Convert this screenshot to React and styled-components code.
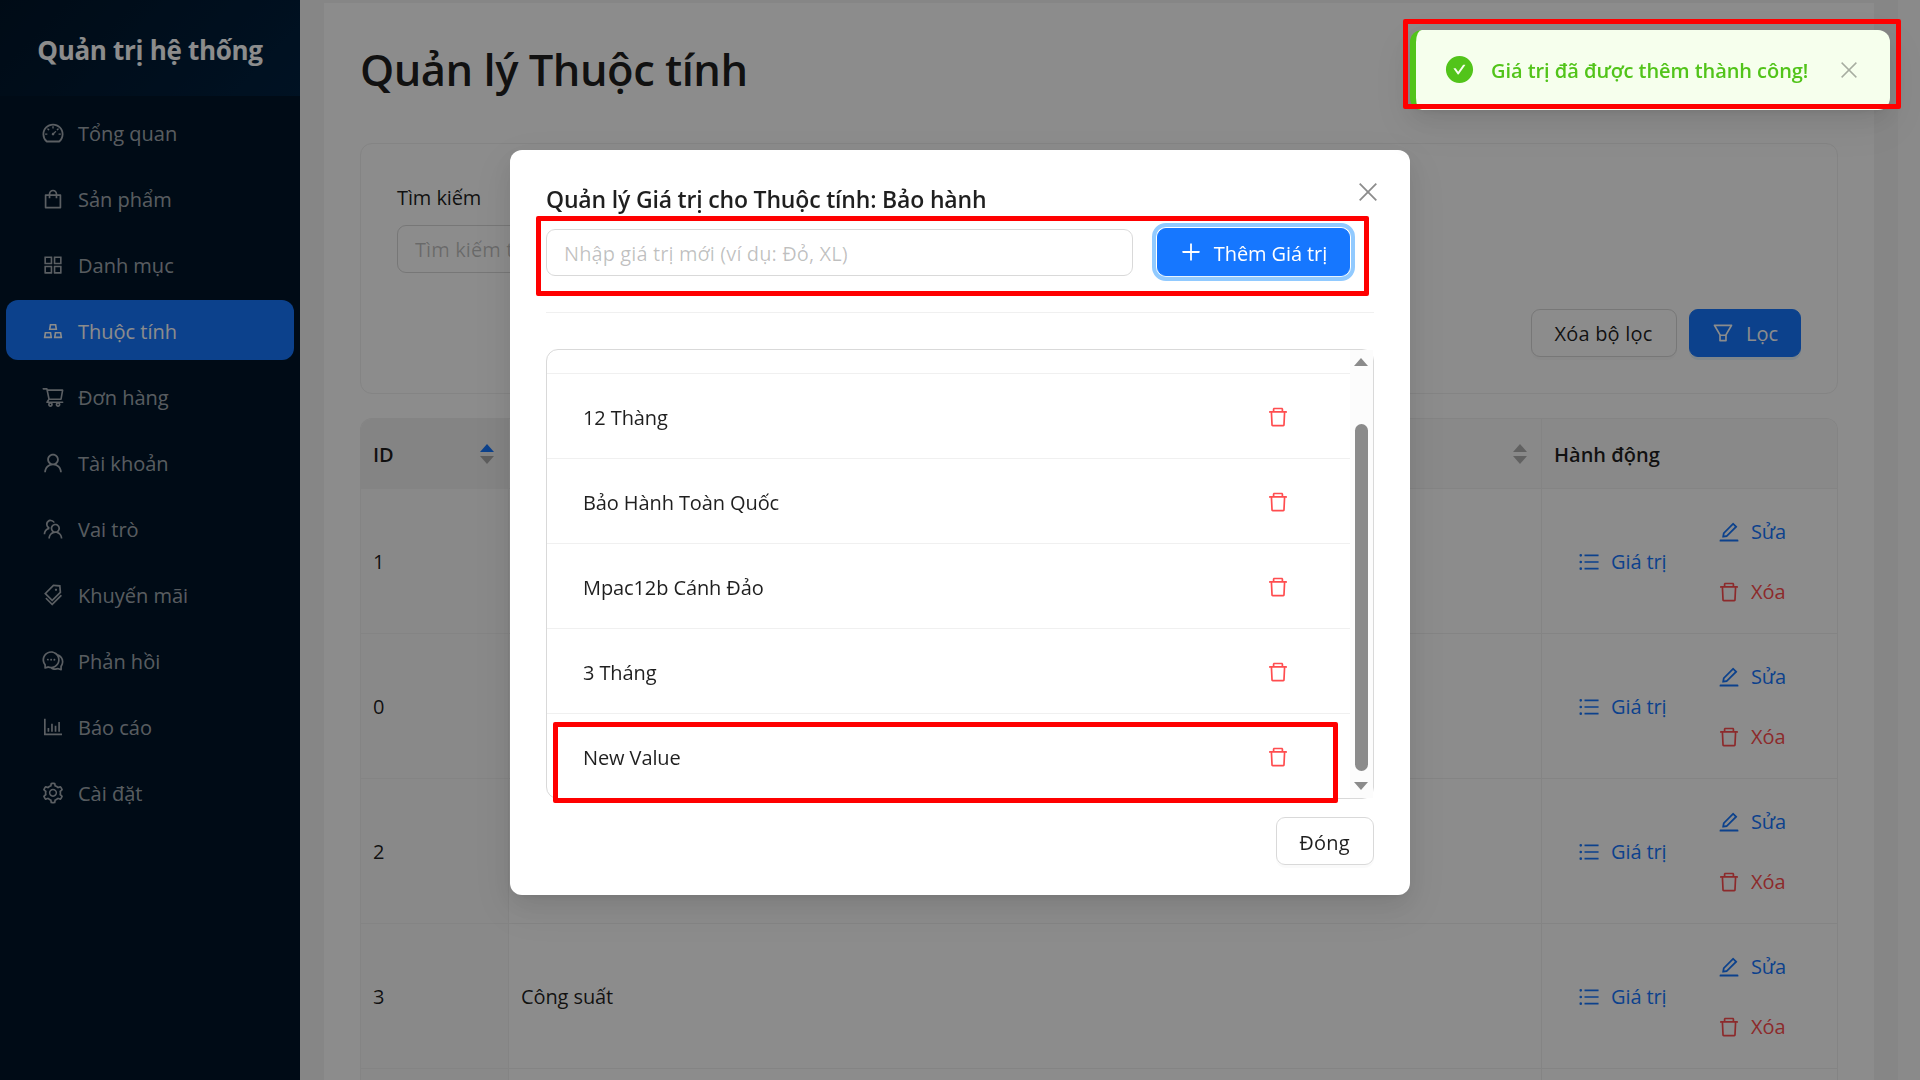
import React from "react";
import styled, { createGlobalStyle, css } from "styled-components";
import {
  AiOutlineDashboard,
  AiOutlineShopping,
  AiOutlineAppstore,
  AiOutlineGold,
  AiOutlineShoppingCart,
  AiOutlineUser,
  AiOutlineTeam,
  AiOutlineTags,
  AiOutlineComment,
  AiOutlineBarChart,
  AiOutlineSetting,
  AiOutlineFilter,
  AiOutlineUnorderedList,
  AiOutlineEdit,
  AiOutlineDelete,
  AiOutlinePlus,
  AiFillCheckCircle,
} from "react-icons/ai";

const GlobalStyle = createGlobalStyle`
  *, *::before, *::after { box-sizing: border-box; }
  body {
    margin: 0;
    overflow: hidden;
    background: #f5f5f5;
    color: rgba(0, 0, 0, 0.88);
    font-family: "Open Sans", "Noto Sans", sans-serif;
    font-size: 20px;
    line-height: 32px;
    letter-spacing: -0.1px;
  }
  svg { display: block; flex: none; }
`;

const Page = styled.div`
  display: flex;
  width: 1920px;
  height: 1080px;
  overflow: hidden;
`;

/* ---------- sidebar ---------- */
const Sidebar = styled.aside`
  flex: none;
  width: 300px;
  background: #001529;
`;
const Brand = styled.div`
  height: 96px;
  display: flex;
  align-items: center;
  justify-content: center;
  padding-top: 3px;
  background: linear-gradient(135deg, #001529 0%, #002140 100%);
  color: #fff;
  font-size: 26px;
  font-weight: 700;
  letter-spacing: -0.3px;
  white-space: nowrap;
`;
const Menu = styled.nav`
  display: flex;
  flex-direction: column;
  gap: 6px;
  padding: 6px;
`;
const MenuItem = styled.a`
  display: flex;
  align-items: center;
  gap: 13.5px;
  height: 60px;
  padding-left: 34.5px;
  border-radius: 12px;
  color: ${(p) => (p.$active ? "#fff" : "rgba(255, 255, 255, 0.65)")};
  background: ${(p) => (p.$active ? "#1677ff" : "transparent")};
  letter-spacing: 0;
  svg { width: 24px; height: 24px; margin-top: 1px; }
`;
const MenuLabel = styled.span`
  padding-top: 4px;
`;

/* ---------- content ---------- */
const Content = styled.main`
  flex: 1;
  padding: 3px 24px 0;
`;
const Panel = styled.section`
  height: 1077px;
  padding: 34px 36px 0;
  background: #fff;
`;
const PageScroll = styled.div`
  flex: none;
  width: 22px;
  background: #fcfcfc;
`;
const PageTitle = styled.h1`
  margin: 0 0 40px;
  font-size: 43.5px;
  font-weight: 600;
  line-height: 66px;
  letter-spacing: -0.5px;
`;
const FilterCard = styled.div`
  display: flex;
  flex-direction: column;
  align-items: flex-start;
  height: 251px;
  padding: 36px;
  border: 1px solid #f0f0f0;
  border-radius: 12px;
`;
const FieldLabel = styled.label`
  height: 45px;
  padding-top: 2px;
`;
const Input = styled.div`
  display: flex;
  align-items: center;
  width: ${(p) => p.$width}px;
  height: ${(p) => p.$height}px;
  padding: ${(p) => (p.$height > 47 ? 2 : 3)}px 17px 0;
  border: 1px solid #d9d9d9;
  border-radius: 9px;
  background: #fff;
  color: rgba(0, 0, 0, 0.25);
  letter-spacing: 0.1px;
  white-space: nowrap;
`;
const FilterActions = styled.div`
  display: flex;
  gap: 12px;
  align-self: flex-end;
  margin-top: 36px;
`;
const Button = styled.button`
  display: flex;
  align-items: center;
  justify-content: center;
  gap: 11px;
  width: ${(p) => p.$width}px;
  height: 48px;
  padding: 0 1px 0 0;
  border: 1px solid #d9d9d9;
  border-radius: 9px;
  background: #fff;
  box-shadow: 0 3px 0 rgba(0, 0, 0, 0.02);
  color: rgba(0, 0, 0, 0.88);
  font: inherit;
  letter-spacing: 0.2px;
  white-space: nowrap;
  svg { width: 24px; height: 24px; }
  span { padding-top: ${(p) => (p.$low ? 3 : 2)}px; }
  ${(p) =>
    p.$primary &&
    css`
      border-color: #1677ff;
      background: #1677ff;
      color: #fff;
      letter-spacing: -0.1px;
      box-shadow: 0 3px 0 rgba(5, 145, 255, 0.1);
    `}
  ${(p) =>
    p.$focused &&
    css`
      outline: 4.5px solid #91caff;
      outline-offset: 1px;
    `}
`;

/* ---------- table ---------- */
const Table = styled.div`
  margin-top: 24px;
  border: 1px solid #f0f0f0;
  border-bottom: 0;
  border-radius: 12px 12px 0 0;
  overflow: hidden;
`;
const Row = styled.div`
  display: grid;
  grid-template-columns: 148px 1033px 1fr;
  height: ${(p) => (p.$head ? 70 : 145)}px;
  font-weight: ${(p) => (p.$head ? 600 : 400)};
  letter-spacing: ${(p) => (p.$head ? 0 : -0.1)}px;
  background: ${(p) => (p.$head ? "#fafafa" : "#fff")};
`;
const Cell = styled.div`
  display: flex;
  align-items: center;
  justify-content: space-between;
  padding: 2px 14px 0 12px;
  border-right: ${(p) => (p.$last ? 0 : 1)}px solid #f0f0f0;
  border-bottom: 1px solid #f0f0f0;
  background: ${(p) => p.$bg || "transparent"};
`;
const Sorter = styled.span`
  display: flex;
  flex-direction: column;
  gap: 4px;
  padding-bottom: 2px;
`;
const Caret = styled.i`
  width: 0;
  height: 0;
  border: 7px solid transparent;
  ${(p) =>
    p.$up
      ? css`border-top: 0; border-bottom: 8px solid ${p.$on ? "#1677ff" : "rgba(0,0,0,0.29)"};`
      : css`border-bottom: 0; border-top: 8px solid rgba(0, 0, 0, 0.29);`}
`;
const ActionCell = styled(Cell)`
  justify-content: flex-start;
  padding: 0 0 0 13px;
`;
const ActionStack = styled.div`
  display: flex;
  flex-direction: column;
  gap: 12px;
`;
const LinkButton = styled.a`
  display: flex;
  align-items: center;
  gap: 10.5px;
  width: ${(p) => p.$width || 110}px;
  height: 48px;
  padding-left: 21.5px;
  color: ${(p) => (p.$danger ? "#ff4d4f" : "#1677ff")};
  white-space: nowrap;
  svg { width: 24px; height: 24px; margin-top: 1px; }
  span { padding-top: 2px; }
`;

/* ---------- modal ---------- */
const Mask = styled.div`
  position: fixed;
  inset: 0;
  display: flex;
  justify-content: center;
  align-items: flex-start;
  padding-top: 150px;
  background: rgba(0, 0, 0, 0.45);
`;
const Dialog = styled.div`
  width: 900px;
  height: 745px;
  padding: 30px 36px;
  border-radius: 12px;
  background: #fff;
  box-shadow: 0 9px 24px rgba(0, 0, 0, 0.08), 0 5px 9px -6px rgba(0, 0, 0, 0.12),
    0 14px 42px 12px rgba(0, 0, 0, 0.05);
`;
const DialogHead = styled.div`
  display: flex;
  justify-content: space-between;
  height: 48px;
  font-size: 23px;
  font-weight: 600;
  line-height: 38px;
  letter-spacing: -0.18px;
  svg {
    margin: 3px -3px 0 0;
    color: rgba(0, 0, 0, 0.45);
  }
`;
const AddRow = styled.div`
  display: flex;
  align-items: center;
  gap: 24px;
`;
const Divider = styled.hr`
  height: 1px;
  margin: 36px 0;
  border: 0;
  background: #f0f0f0;
`;
const ListBox = styled.div`
  display: flex;
  height: 450px;
  border: 1px solid #d9d9d9;
  border-radius: 12px;
`;
const ListItems = styled.div`
  flex: 1;
`;
const ListItem = styled.div`
  display: flex;
  align-items: center;
  justify-content: space-between;
  height: 85px;
  padding: ${(p) => (p.$last ? 2 : 3)}px 60px 0 36px;
  border-bottom: ${(p) => (p.$last ? 0 : 1)}px solid #f0f0f0;
  svg { width: 24px; height: 24px; color: #ff4d4f; margin-top: -2px; }
`;
const ListItemTail = styled.div`
  height: 24px;
  border-bottom: 1px solid #f0f0f0;
`;
const ListScroll = styled.div`
  display: flex;
  flex-direction: column;
  align-items: center;
  width: 23px;
  padding: 8px 1px 0 0;
  background: #fcfcfc;
`;
const ScrollArrow = styled.i`
  border: 7.5px solid transparent;
  ${(p) =>
    p.$up
      ? css`border-top: 0; border-bottom: 8px solid #8b8b8b;`
      : css`border-bottom: 0; border-top: 8px solid #8b8b8b;`}
`;
const ScrollThumb = styled.div`
  width: 13px;
  height: 347px;
  margin: 58px 0 11px;
  border-radius: 7px;
  background: #8b8b8b;
`;
const DialogFoot = styled.div`
  display: flex;
  justify-content: flex-end;
  margin-top: 18px;
`;

/* ---------- notification ---------- */
const Toast = styled.div`
  position: fixed;
  top: 30px;
  right: 30px;
  display: flex;
  align-items: center;
  width: 480px;
  height: 80px;
  padding-left: 28px;
  border-left: 6px solid #52c41a;
  border-radius: 12px;
  background: #f6ffed;
  box-shadow: 0 9px 24px rgba(0, 0, 0, 0.08), 0 5px 9px -6px rgba(0, 0, 0, 0.12),
    0 14px 42px 12px rgba(0, 0, 0, 0.05);
  color: #52c41a;
`;
const ToastIcon = styled(AiFillCheckCircle)`
  width: 31px;
  height: 31px;
  margin-bottom: 1px;
`;
const ToastText = styled.div`
  width: 366px;
  padding: 2px 0 0 16px;
  font-weight: 600;
  letter-spacing: -0.06px;
  white-space: nowrap;
`;
const ToastClose = styled.span`
  color: rgba(0, 0, 0, 0.32);
  padding-bottom: 1px;
`;

/* red callout drawn over the page */
const Highlight = styled.div`
  position: fixed;
  left: ${(p) => p.$x}px;
  top: ${(p) => p.$y}px;
  width: ${(p) => p.$w}px;
  height: ${(p) => p.$h}px;
  border: 5px solid #ff0000;
  border-radius: 2px;
`;

function Cross({ size, weight }) {
  return (
    <svg width={size} height={size} viewBox="0 0 18 18" stroke="currentColor" strokeWidth={weight}>
      <path d="M.7.7 17.3 17.3M17.3.7.7 17.3" />
    </svg>
  );
}

const menu = [
  [AiOutlineDashboard, "Tổng quan"],
  [AiOutlineShopping, "Sản phẩm"],
  [AiOutlineAppstore, "Danh mục"],
  [AiOutlineGold, "Thuộc tính"],
  [AiOutlineShoppingCart, "Đơn hàng"],
  [AiOutlineUser, "Tài khoản"],
  [AiOutlineTeam, "Vai trò"],
  [AiOutlineTags, "Khuyến mãi"],
  [AiOutlineComment, "Phản hồi"],
  [AiOutlineBarChart, "Báo cáo"],
  [AiOutlineSetting, "Cài đặt"],
];

const rows = [
  ["1", ""],
  ["0", ""],
  ["2", ""],
  ["3", "Công suất"],
];

const values = ["12 Thàng", "Bảo Hành Toàn Quốc", "Mpac12b Cánh Đảo", "3 Tháng", "New Value"];

export default function App() {
  return (
    <>
      <GlobalStyle />
      <Page>
        <Sidebar>
          <Brand>Quản trị hệ thống</Brand>
          <Menu>
            {menu.map(([Icon, label]) => (
              <MenuItem key={label} $active={label === "Thuộc tính"}>
                <Icon />
                <MenuLabel>{label}</MenuLabel>
              </MenuItem>
            ))}
          </Menu>
        </Sidebar>
        <Content>
          <Panel>
            <PageTitle>Quản lý Thuộc tính</PageTitle>
            <FilterCard>
              <FieldLabel>Tìm kiếm</FieldLabel>
              <Input $width={340} $height={48}>Tìm kiếm t</Input>
              <FilterActions>
                <Button $width={146}><span>Xóa bộ lọc</span></Button>
                <Button $width={112} $primary>
                  <AiOutlineFilter />
                  <span>Lọc</span>
                </Button>
              </FilterActions>
            </FilterCard>
            <Table>
              <Row $head>
                <Cell $bg="#f0f0f0">
                  ID
                  <Sorter><Caret $up $on /><Caret /></Sorter>
                </Cell>
                <Cell>
                  <span />
                  <Sorter><Caret $up /><Caret /></Sorter>
                </Cell>
                <Cell $last>Hành động</Cell>
              </Row>
              {rows.map(([id, name]) => (
                <Row key={id}>
                  <Cell $bg="#fafafa">{id}</Cell>
                  <Cell>{name}</Cell>
                  <ActionCell $last>
                    <LinkButton $width={140}>
                      <AiOutlineUnorderedList />
                      <span>Giá trị</span>
                    </LinkButton>
                    <ActionStack>
                      <LinkButton><AiOutlineEdit /><span>Sửa</span></LinkButton>
                      <LinkButton $danger><AiOutlineDelete /><span>Xóa</span></LinkButton>
                    </ActionStack>
                  </ActionCell>
                </Row>
              ))}
              <Row>
                <Cell $bg="#fafafa" />
                <Cell />
                <Cell $last />
              </Row>
            </Table>
          </Panel>
        </Content>
        <PageScroll />
      </Page>

      <Mask>
        <Dialog>
          <DialogHead>
            Quản lý Giá trị cho Thuộc tính: Bảo hành
            <Cross size={18} weight={1.8} />
          </DialogHead>
          <AddRow>
            <Input $width={587} $height={47}>Nhập giá trị mới (ví dụ: Đỏ, XL)</Input>
            <Button $width={193} $primary $focused $low>
              <AiOutlinePlus />
              <span>Thêm Giá trị</span>
            </Button>
          </AddRow>
          <Divider />
          <ListBox>
            <ListItems>
              <ListItemTail />
              {values.map((v, i) => (
                <ListItem key={v} $last={i === values.length - 1}>
                  {v}
                  <AiOutlineDelete />
                </ListItem>
              ))}
            </ListItems>
            <ListScroll>
              <ScrollArrow $up />
              <ScrollThumb />
              <ScrollArrow />
            </ListScroll>
          </ListBox>
          <DialogFoot>
            <Button $width={98} $low><span>Đóng</span></Button>
          </DialogFoot>
        </Dialog>
      </Mask>

      <Toast>
        <ToastIcon />
        <ToastText>Giá trị đã được thêm thành công!</ToastText>
        <ToastClose><Cross size={16} weight={1.6} /></ToastClose>
      </Toast>

      <Highlight $x={1403} $y={19} $w={498} $h={90} />
      <Highlight $x={536} $y={216} $w={833} $h={80} />
      <Highlight $x={553} $y={722} $w={785} $h={81} />
    </>
  );
}
